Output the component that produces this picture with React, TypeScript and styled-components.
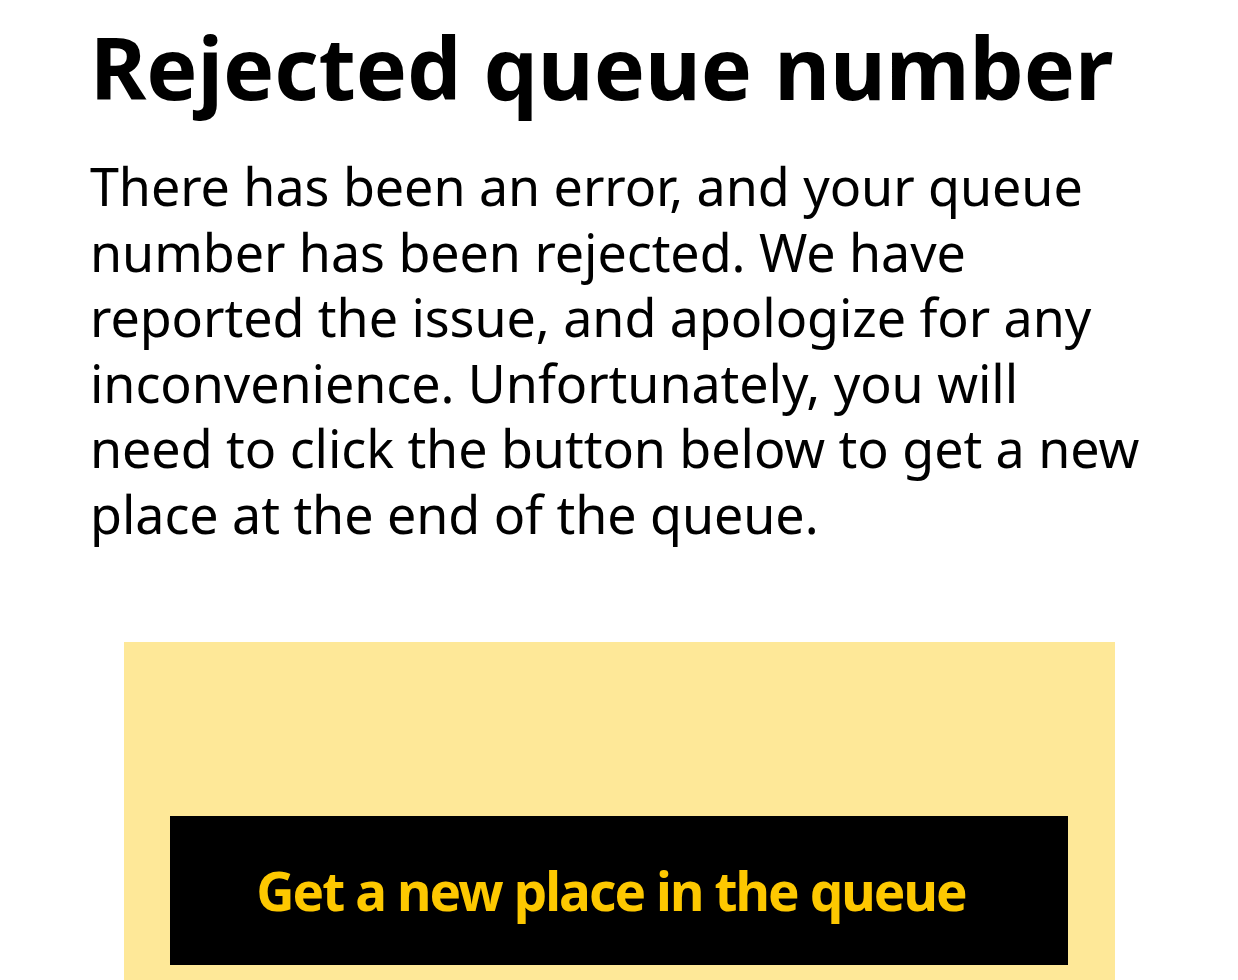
import React from "react";
import styled, { createGlobalStyle } from "styled-components";

const Global = createGlobalStyle`
  html, body { margin: 0; padding: 0; background: #ffffff; }
  body { font-family: "Noto Sans", "Open Sans", sans-serif; color: #000; }
`;

const Page = styled.main`
  padding: 0 0 0 90px;
  width: 1238px;
  box-sizing: border-box;
  overflow: hidden;
  height: 980px;
`;

const Title = styled.h1`
  margin: 0;
  padding-top: 17px;
  font-family: "Noto Sans", sans-serif;
  font-weight: 700;
  font-size: 86px;
  line-height: 100px;
  letter-spacing: -0.1px;
  white-space: nowrap;
`;

const Body = styled.p`
  margin: 36px 0 0;
  font-family: "Noto Sans", sans-serif;
  font-size: 52px;
  line-height: 65.5px;
  letter-spacing: -0.05px;
  white-space: nowrap;
`;

const Panel = styled.section`
  margin: 96px 0 0 34px;
  width: 991px;
  background: #fee898;
  padding: 174px 47px 40px 46px;
  box-sizing: border-box;
`;

const Button = styled.button`
  display: flex;
  align-items: center;
  justify-content: center;
  width: 100%;
  height: 149px;
  border: 0;
  background: #000;
  color: #fdc800;
  font-family: "Noto Sans", sans-serif;
  font-weight: 700;
  font-size: 53px;
  letter-spacing: -1.9px;
  padding: 0 16px 0 0;
  cursor: pointer;
`;

export default function App() {
  return (
    <>
      <Global />
      <Page>
        <Title>Rejected queue number</Title>
        <Body>
          There has been an error, and your queue
          <br />
          number has been rejected. We have
          <br />
          reported the issue, and apologize for any
          <br />
          inconvenience. Unfortunately, you will
          <br />
          need to click the button below to get a new
          <br />
          place at the end of the queue.
        </Body>
        <Panel>
          <Button type="button">Get a new place in the queue</Button>
        </Panel>
      </Page>
    </>
  );
}
